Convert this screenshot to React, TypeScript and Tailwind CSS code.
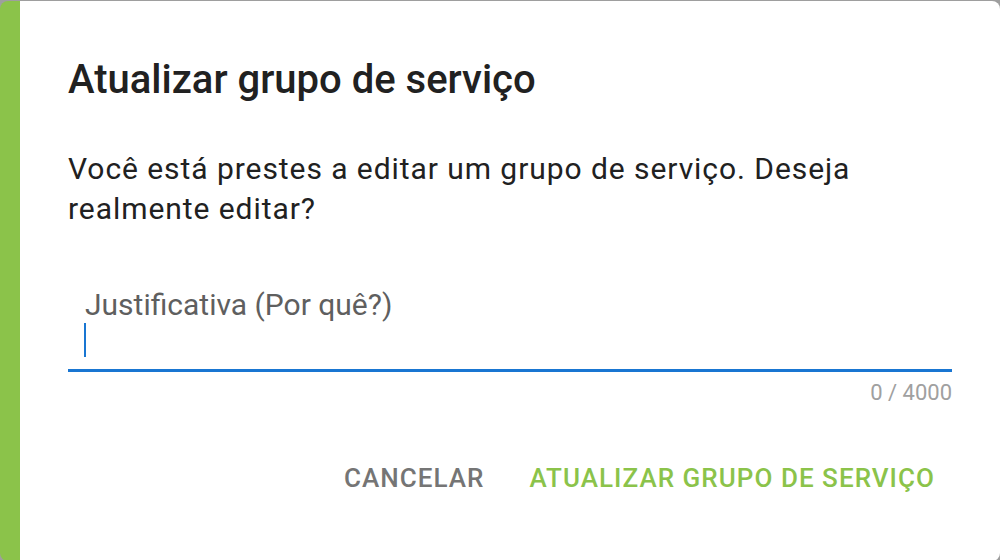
export default function App() {
  return (
    <div className="h-[560px] w-[1000px] overflow-hidden bg-[#9e9e9e] pt-px font-['Roboto',sans-serif]">
      <div className="flex h-[560px] flex-col rounded-lg border-l-[20px] border-[#8bc34a] bg-white px-12">
        <h2 className="mt-[55px] text-[40px] font-medium leading-[48px] text-[#212121]">
          Atualizar grupo de serviço
        </h2>
        <p className="mt-[45px] text-[30px] leading-[40px] tracking-[0.03125em] text-[#212121]">
          Você está prestes a editar um grupo de serviço. Deseja realmente editar?
        </p>

        <div className="mt-[58px] flex flex-col">
          <label className="pl-[17px] text-[30px] leading-[36px] text-[#5f5f5f]">
            Justificativa (Por quê?)
          </label>
          <div className="flex h-[46px] pl-4">
            <span className="h-[34px] w-[2px] bg-[#1976d2]" />
          </div>
          <div className="h-[3px] bg-[#1976d2]" />
          <div className="mt-2 text-right text-[22px] leading-[26px] text-[#a0a0a0]">0 / 4000</div>
        </div>

        <div className="mt-[52px] flex justify-end gap-[11px]">
          <button className="px-[17px] text-[26px] font-medium uppercase leading-[40px] tracking-[0.04em] text-[#757575]">
            Cancelar
          </button>
          <button className="px-[17px] text-[26px] font-medium uppercase leading-[40px] tracking-[0.04em] text-[#8bc34a]">
            Atualizar grupo de serviço
          </button>
        </div>
      </div>
    </div>
  );
}
